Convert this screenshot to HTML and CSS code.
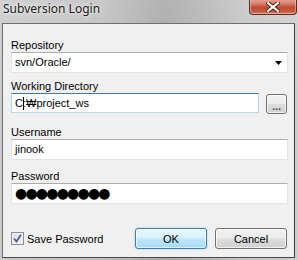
FILE: index.html
```html
<!DOCTYPE html>
<html lang="en">
<head>
    <meta charset="UTF-8">
    <title>Subversion Login</title>
    <link rel="stylesheet" href="styles.css">
</head>
<body>
    <div class="window">
        <div class="titlebar">
            <span class="title">Subversion Login</span>
            <div class="close">
                <svg width="14" height="10" viewBox="0 0 14 10">
                    <path d="M2 1 L12 9 M12 1 L2 9" stroke="#4a1a14" stroke-width="4" stroke-linecap="square"/>
                    <path d="M2 1 L12 9 M12 1 L2 9" stroke="#ffffff" stroke-width="2.2" stroke-linecap="square"/>
                </svg>
            </div>
        </div>

        <div class="client">
            <div class="field repo">
                <div class="label">Repository</div>
                <div class="edit combo">
                    <span>svn/Oracle/</span>
                    <svg class="arrow" width="7" height="4" viewBox="0 0 7 4"><path d="M0 0 H7 L3.5 4 Z" fill="#000"/></svg>
                </div>
            </div>

            <div class="field dir">
                <div class="label">Working Directory</div>
                <div class="row">
                    <div class="edit focused">C<span class="caret"></span>:₩project_ws</div>
                    <div class="btn browse">...</div>
                </div>
            </div>

            <div class="field user">
                <div class="label">Username</div>
                <div class="edit">jinook</div>
            </div>

            <div class="field pass">
                <div class="label">Password</div>
                <div class="edit dots">●●●●●●●●●</div>
            </div>

            <div class="actions">
                <label class="check">
                    <span class="box">
                        <svg width="9" height="9" viewBox="0 0 9 9"><path d="M1 4.5 L3.5 7.5 L8 0.8" fill="none" stroke="#4a5f97" stroke-width="1.8"/></svg>
                    </span>
                    Save Password
                </label>
                <div class="btn default">OK</div>
                <div class="btn">Cancel</div>
            </div>
        </div>
    </div>
</body>
</html>
```

FILE: styles.css
```css
* {
    margin: 0;
    padding: 0;
    box-sizing: border-box;
}

body {
    font-family: 'Liberation Sans', Arial, sans-serif;
    font-size: 11px;
    color: #000;
    background: #c0c0c0;
}

.window {
    width: 298px;
    height: 260px;
    display: flex;
    flex-direction: column;
    background:
        linear-gradient(to bottom, rgba(255,255,255,0.12), rgba(255,255,255,0) 40%),
        linear-gradient(to right, #cacaca 0%, #bfbfbf 35%, #a8a8a8 55%, #b4b4b4 68%, #c6c6c6 82%, #cdcdcd 100%);
}

.titlebar {
    height: 23px;
    display: flex;
    justify-content: space-between;
    align-items: flex-start;
}

.title {
    font-family: 'Noto Sans', 'Open Sans', sans-serif;
    font-size: 12px;
    line-height: 16px;
    padding: 1px 0 0 3px;
    color: #1b1b1b;
    text-shadow: 0 0 6px rgba(255,255,255,0.9), 0 0 3px rgba(255,255,255,0.8);
}

.close {
    width: 48px;
    height: 16px;
    margin: -1px 1px 0 0;
    border: 1px solid #5e2a22;
    border-top: none;
    border-radius: 0 0 4px 4px;
    background: linear-gradient(to bottom, #e9a898 0%, #d47764 35%, #c24a33 55%, #c85a40 85%, #d98a70 100%);
    box-shadow: inset 0 0 0 1px rgba(255,220,210,0.45);
    display: flex;
    align-items: center;
    justify-content: center;
}

.client {
    flex: 1;
    margin: 0 3px 2px 2px;
    background: #f0f0f0;
    border: 1px solid #6f6f6f;
    border-right-color: #3c3c3c;
    border-bottom-color: #4a4a4a;
    padding: 15px 6px 0 8px;
}

.label {
    height: 13px;
    line-height: 13px;
}

.field.dir { margin-top: 7px; }
.field.user { margin-top: 12px; }
.field.pass { margin-top: 10px; }

.edit {
    height: 21px;
    background: #fff;
    border: 1px solid #e2e3ea;
    border-top-color: #abadb3;
    padding: 0 3px;
    line-height: 19px;
    font-size: 11px;
    display: flex;
    align-items: center;
    white-space: nowrap;
}

.combo {
    justify-content: space-between;
    padding-right: 5px;
}

.arrow {
    display: block;
}

.row {
    display: flex;
    gap: 7px;
    align-items: flex-start;
}

.row .edit {
    flex: 1;
    height: 20px;
}

.edit.focused {
    border-color: #b5cfe7;
    border-top-color: #3d7bad;
    border-bottom-color: #b7d9ed;
}

.caret {
    display: inline-block;
    width: 1px;
    height: 13px;
    background: #000;
    margin-right: -1px;
}

.btn {
    height: 21px;
    border: 1px solid #707070;
    border-radius: 3px;
    background: linear-gradient(to bottom, #f2f2f2 0%, #ebebeb 48%, #dddddd 52%, #cfcfcf 100%);
    box-shadow: inset 0 0 0 1px rgba(255,255,255,0.7);
    display: flex;
    align-items: center;
    justify-content: center;
    font-size: 11px;
    width: 72px;
}

.btn.browse {
    width: 21px;
    height: 20px;
    margin-top: 1px;
    margin-right: 1px;
    font-weight: bold;
    align-items: flex-end;
    line-height: 14px;
    color: #505050;
}

.btn.default {
    border-color: #3c7fb1;
    background: linear-gradient(to bottom, #eaf6fd 0%, #d9f0fc 48%, #bee6fd 52%, #a7d9f5 100%);
    box-shadow: inset 0 0 0 1px rgba(255,255,255,0.6), 0 0 2px #7fc4ee;
}

.dots {
    font-family: 'DejaVu Sans', sans-serif;
    font-size: 14px;
    letter-spacing: -1.8px;
}

.actions {
    margin-top: 24px;
    display: flex;
    align-items: center;
    gap: 8px;
    padding-right: 1px;
}

.check {
    flex: 1;
    display: flex;
    align-items: center;
    gap: 3px;
    font-size: 11px;
}

.box {
    width: 13px;
    height: 13px;
    border: 1px solid #8e8f8f;
    background: linear-gradient(135deg, #dcdcdc, #f6f6f6);
    display: flex;
    align-items: center;
    justify-content: center;
    box-shadow: inset 0 0 0 1px #f4f4f4;
}
```
